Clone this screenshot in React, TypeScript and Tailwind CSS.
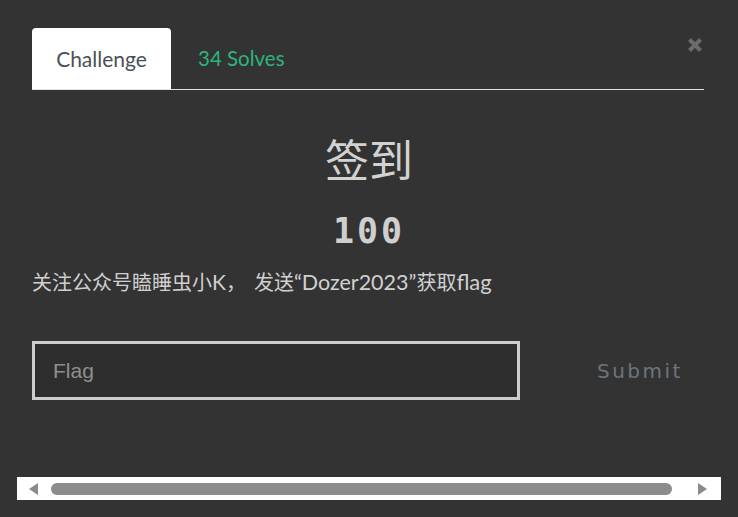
import React from "react";

export default function App() {
  return (
    <div className="w-[738px] h-[517px] bg-[#333333] relative overflow-hidden flex flex-col" style={{ fontFamily: "Lato, 'Noto Sans CJK SC', sans-serif" }}>
      <button className="absolute left-[687px] top-[37px] w-[16px] h-[16px]" aria-label="Close">
        <svg width="16" height="16" viewBox="0 0 16 16">
          <path d="M2.5 2.5 L13.5 13.5 M13.5 2.5 L2.5 13.5" stroke="#6b6b6b" strokeWidth="4" strokeLinecap="butt" />
        </svg>
      </button>

      <div className="ml-[32px] mr-[34px] mt-[28px] flex border-b border-[#dee2e6]">
        <div className="w-[139px] h-[61px] bg-white rounded-t-[4px] flex items-center justify-center text-[21px] text-[#495057]">
          Challenge
        </div>
        <div className="h-[61px] flex items-center pl-[27px] text-[20.5px] text-[#2bb57d]">34 Solves</div>
      </div>

      <div className="mt-[46px] text-center text-[44px] leading-[44px] text-[#d2d2d2]" style={{ fontFamily: "'Noto Sans CJK SC', sans-serif" }}>
        签到
      </div>

      <div className="mt-[34px] text-center text-[35px] leading-[34px] font-bold text-[#cfcfcf] tracking-[3px]" style={{ fontFamily: "'DejaVu Sans Mono', monospace" }}>
        100
      </div>

      <div className="mt-[22px] ml-[32px] text-[20px] leading-[24px] text-[#d0d0d0]">
        关注公众号瞌睡虫小<span className="text-[21px]">K</span>，<span className="inline-block w-[8px]" />发送<span className="text-[21.5px]">“Dozer2023”</span>获取<span className="text-[22px]">flag</span>
      </div>

      <div className="mt-[47px] ml-[32px] flex items-center">
        <div className="w-[488px] h-[59px] border-[3px] border-[#cdcdcd] bg-[#2e2e2e] flex items-center pl-[18px]">
          <span className="text-[21px] text-[#8e8e8e]" style={{ fontFamily: "'Liberation Sans', Arial, sans-serif" }}>Flag</span>
        </div>
        <div className="ml-[77px] text-[20px] text-[#6c757d] tracking-[2.5px]" style={{ fontFamily: "'DejaVu Sans', sans-serif" }}>
          Submit
        </div>
      </div>

      <div className="mt-auto mb-[17px] mx-[17px] h-[23px] bg-white flex items-center">
        <svg className="ml-[11px]" width="11" height="12" viewBox="0 0 11 12">
          <path d="M10 0 L10 12 L1 6 Z" fill="#8a8a8a" />
        </svg>
        <div className="ml-[12px] w-[621px] h-[12px] rounded-full bg-[#8c8c8c]" />
        <svg className="ml-[25px]" width="11" height="12" viewBox="0 0 11 12">
          <path d="M1 0 L1 12 L10 6 Z" fill="#8a8a8a" />
        </svg>
      </div>
    </div>
  );
}
